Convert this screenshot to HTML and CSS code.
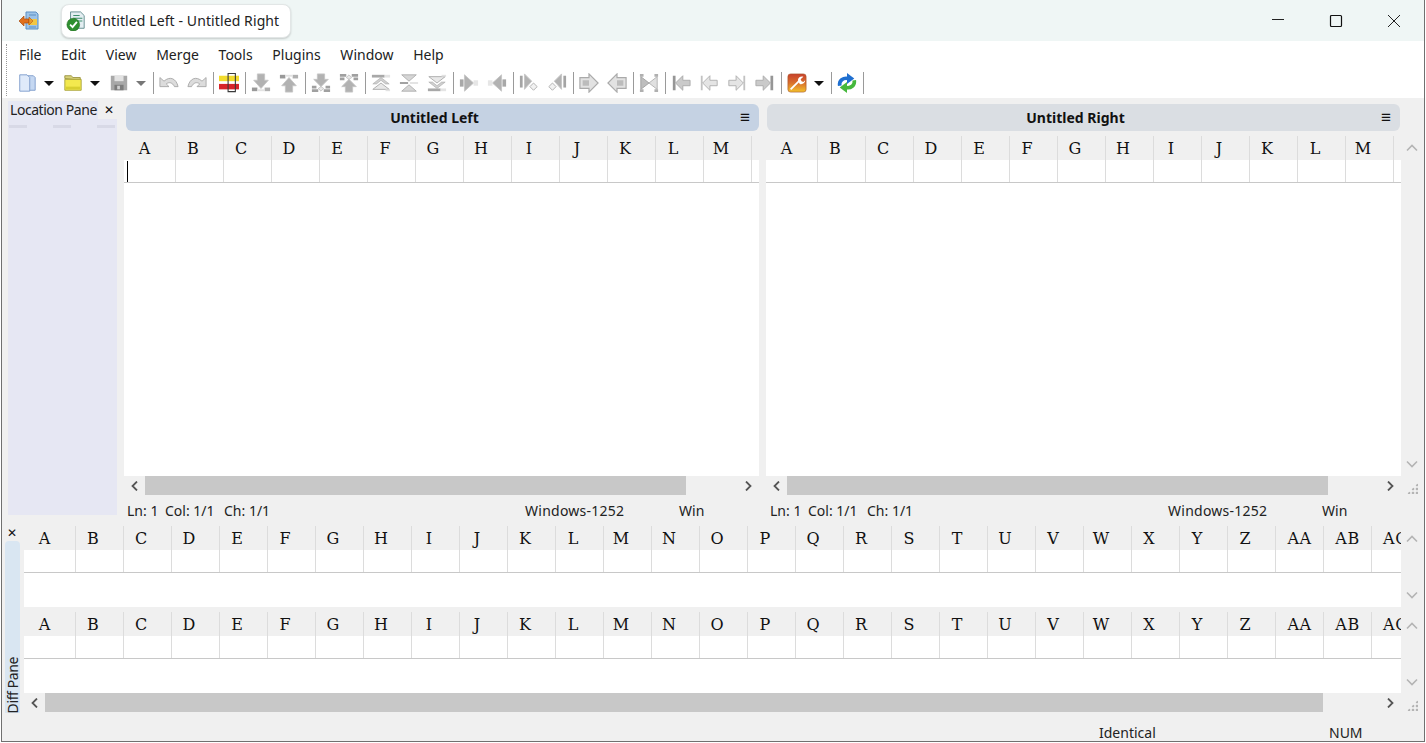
FILE: index.html
```html
<!DOCTYPE html>
<html lang="en">
<head>
    <meta charset="UTF-8">
    <title>Untitled Left - Untitled Right</title>
    <link rel="stylesheet" href="styles.css">
</head>
<body>
    <svg class="defs" width="0" height="0">
        <defs>
            <linearGradient id="tool-grad" x1="0" y1="0" x2="0" y2="1">
                <stop offset="0" stop-color="#c8402c"/>
                <stop offset="0.5" stop-color="#d9702c"/>
                <stop offset="1" stop-color="#f3c22c"/>
            </linearGradient>
            <symbol id="i-app" viewBox="0 0 22 22">
                <path d="M8 2h10l2 2v15H8z" fill="#9cc3e8" stroke="#5b8fc4"/>
                <path d="M10 9h9v6h-9z" fill="#f2c744"/>
                <path d="M11 5h7M11 17h7" stroke="#5b8fc4"/>
                <path d="M1 11l5-5v3h5v4H6v3z" fill="#e0701c" stroke="#a64a10" stroke-width=".7"/>
                <path d="M15 11l-4-4v8z" fill="#eb9a2c" stroke="#a64a10" stroke-width=".5"/>
            </symbol>
            <symbol id="i-doc" viewBox="0 0 22 22">
                <path d="M5 1h11l4 4v14H5z" fill="#e4eef2" stroke="#5f8a8c"/>
                <path d="M8 5h7M8 8h10M8 11h10" stroke="#3f8f6f" stroke-width="1.200"/>
                <circle cx="8" cy="15" r="7" fill="#2f8f2f" stroke="#1d6a1d" stroke-width=".6"/>
                <path d="M4.500 15l2.700 2.700L12 12" fill="none" stroke="#fff" stroke-width="2"/>
            </symbol>
            <symbol id="i-new" viewBox="0 0 22 22">
                <path d="M10 3h8l2 2v14h-10z" fill="#c5d8f2" stroke="#7d9ccb"/>
                <path d="M3 2h8l3 3v15H3z" fill="#dfeafa" stroke="#7d9ccb"/>
            </symbol>
            <symbol id="i-open" viewBox="0 0 22 22">
                <path d="M2 6V3h7l2 2h8v3z" fill="#d8d27a" stroke="#9a9440"/>
                <path d="M2 7h18v12H2z" fill="#f3e94e" stroke="#a9a23c"/>
                <path d="M3 15h16v3H3z" fill="#d8cf30"/>
            </symbol>
            <symbol id="i-save" viewBox="0 0 22 22">
                <path d="M2 3h18v16H2z" fill="#a8a8a8"/>
                <path d="M6 3h10v6H6z" fill="#e2e2e2"/>
                <path d="M6 13h10v6H6z" fill="#7c7c7c"/>
                <path d="M9 14h3v4H9z" fill="#d0d0d0"/>
            </symbol>
            <symbol id="i-undo" viewBox="0 0 22 22">
                <path d="M1 5v10h10l-3-3c3-2.500 7-1.500 9 3h4C19 6 12 3 5.500 9z" fill="#dcdcdc" stroke="#a8a8a8"/>
            </symbol>
            <symbol id="i-marker" viewBox="0 0 22 22">
                <path d="M0 3h22v6H0z" fill="#f3dc2e"/>
                <path d="M0 12h22v6H0z" fill="#d8242a"/>
                <path d="M10 .5h8v20h-8z" fill="none" stroke="#3a3a3a" stroke-width="1.200"/>
            </symbol>
            <symbol id="i-next" viewBox="0 0 22 22">
                <path d="M7 1h8v7h4l-8 9-8-9h4z" fill="#b2b2b2" stroke="#c6c6c6"/>
                <path d="M1 16h6v4H1z" fill="#999"/>
                <path d="M15 16h6v4h-6z" fill="#b0b0b0"/>
                <path d="M7 18h8v2H7z" fill="#e2e2e2"/>
            </symbol>
            <symbol id="i-nextc" viewBox="0 0 22 22">
                <path d="M7 1h8v6h4l-8 8-8-8h4z" fill="#b2b2b2" stroke="#c6c6c6"/>
                <path d="M1 14h5v3H1zM16 14h5v3h-5zM1 18h7v3H1zM14 18h7v3h-7z" fill="#a0a0a0"/>
                <path d="M8 17l3-2 3 2-3 3z" fill="#e8e8e8" stroke="#b0b0b0" stroke-width=".7"/>
            </symbol>
            <symbol id="i-first" viewBox="0 0 22 22">
                <path d="M1 2h14v3H1z" fill="#a8a8a8"/>
                <path d="M15 2h6v3h-6z" fill="#e4e4e4"/>
                <path d="M11 5l9 7h-4l-5-4-5 4H2z" fill="#d0d0d0" stroke="#ababab" stroke-width=".7"/>
                <path d="M11 11l9 7H2z" fill="#e8e8e8" stroke="#ababab"/>
                <path d="M16 18h5v2h-5z" fill="#e2e2e2"/>
            </symbol>
            <symbol id="i-cur" viewBox="0 0 22 22">
                <path d="M3 2h16l-8 7z" fill="#d6d6d6" stroke="#aeaeae"/>
                <path d="M3 20h16l-8-7z" fill="#d6d6d6" stroke="#aeaeae"/>
                <path d="M1 10h9v2H1z" fill="#999"/>
                <path d="M12 10h9v2h-9z" fill="#e2e2e2"/>
            </symbol>
            <symbol id="i-copy" viewBox="0 0 22 22">
                <path d="M1 7h4v8H1z" fill="#a8a8a8"/>
                <path d="M6 2l10 9-10 9z" fill="#b2b2b2" stroke="#c6c6c6"/>
                <path d="M16 8h5v6h-5z" fill="#e6e6e6"/>
            </symbol>
            <symbol id="i-copyd" viewBox="0 0 22 22">
                <path d="M1 3h3v13H1z" fill="#a4a4a4"/>
                <path d="M6 1l8 8-8 9z" fill="#b2b2b2" stroke="#c6c6c6"/>
                <path d="M16 11l4 4-4 4-4-4z" fill="#f2f2f2" stroke="#adadad"/>
            </symbol>
            <symbol id="i-copyb" viewBox="0 0 22 22">
                <path d="M1 5h10V1l10 10-10 10v-4H1z" fill="#e2e2e2" stroke="#aaa" stroke-width="1.300"/>
                <path d="M4 8h7v6H4z" fill="#bcbcbc"/>
            </symbol>
            <symbol id="i-all" viewBox="0 0 22 22">
                <path d="M2 4l9 7-9 7z" fill="#bebebe" stroke="#a0a0a0"/>
                <path d="M20 4l-9 7 9 7z" fill="#e0e0e0" stroke="#b0b0b0"/>
                <path d="M1 1h4v3H1zM17 1h4v3h-4zM1 18h4v3H1zM17 18h4v3h-4z" fill="#b0b0b0"/>
            </symbol>
            <symbol id="i-lineend" viewBox="0 0 22 22">
                <path d="M2 3h3v16H2z" fill="#969696"/>
                <path d="M5 11l8-8v5h8v6h-8v5z" fill="#cacaca" stroke="#aaa"/>
            </symbol>
            <symbol id="i-linego" viewBox="0 0 22 22">
                <path d="M2 3h2v16H2z" fill="#c2c2c2"/>
                <path d="M4 11l8-8v5h8v6h-8v5z" fill="#e4e4e4" stroke="#aeaeae"/>
            </symbol>
            <symbol id="i-tools" viewBox="0 0 22 22">
                <rect x="1" y="1" width="20" height="20" rx="3" fill="url(#tool-grad)" stroke="#a8552a" stroke-width=".7"/>
                <path d="M4 18L14 8" stroke="#fff" stroke-width="2"/>
                <path d="M12 8c0-3 3-5 6-4l-3 3 1 2 2 1 2-2c0 3-3 5-6 4z" fill="#fff"/>
            </symbol>
            <symbol id="i-refresh" viewBox="0 0 22 22">
                <path d="M3 14C2 8 7 5 12 6" fill="none" stroke="#1f6fd0" stroke-width="4"/>
                <path d="M11 0l8 6-8 6z" fill="#1f6fd0"/>
                <path d="M19 8c1 6-4 9-9 8" fill="none" stroke="#45b83c" stroke-width="4"/>
                <path d="M11 22l-8-6 8-6z" fill="#45b83c"/>
            </symbol>
            <symbol id="i-up" viewBox="0 0 12 8">
                <path d="M1 6.500l5-5 5 5" fill="none" stroke="#b4b4b4" stroke-width="1.600"/>
            </symbol>
            <symbol id="i-left" viewBox="0 0 8 10">
                <path d="M6.500 .5L2 5l4.500 4.500" fill="none" stroke="#555" stroke-width="1.800"/>
            </symbol>
        </defs>
    </svg>

    <div class="window">
        <div class="titlebar">
            <svg class="app-icon"><use href="#i-app"/></svg>
            <div class="title-tab">
                <svg class="tab-icon"><use href="#i-doc"/></svg>
                <span>Untitled Left - Untitled Right</span>
            </div>
            <div class="win-controls">
                <span class="win-btn"><svg width="14" height="14"><path d="M1 5.500h12" stroke="#222"/></svg></span>
                <span class="win-btn"><svg width="14" height="14"><rect x="1.500" y="1.500" width="11" height="11" rx="1" fill="none" stroke="#111" stroke-width="1.200"/></svg></span>
                <span class="win-btn"><svg width="14" height="14"><path d="M1 1l12 12M13 1L1 13" stroke="#222"/></svg></span>
            </div>
        </div>

        <div class="bars">
            <div class="menubar">
                <span>File</span><span>Edit</span><span>View</span><span>Merge</span><span>Tools</span><span>Plugins</span><span>Window</span><span>Help</span>
            </div>
            <div class="toolbar">
                <span class="tb wide"><svg><use href="#i-new"/></svg><i class="caret"></i></span>
                <span class="tb wide"><svg><use href="#i-open"/></svg><i class="caret"></i></span>
                <span class="tb wide"><svg><use href="#i-save"/></svg><i class="caret off"></i></span>
                <span class="sep"></span>
                <span class="tb"><svg><use href="#i-undo"/></svg></span>
                <span class="tb"><svg class="flip-x"><use href="#i-undo"/></svg></span>
                <span class="sep"></span>
                <span class="tb"><svg><use href="#i-marker"/></svg></span>
                <span class="sep"></span>
                <span class="tb"><svg><use href="#i-next"/></svg></span>
                <span class="tb"><svg class="flip-y"><use href="#i-next"/></svg></span>
                <span class="sep"></span>
                <span class="tb"><svg><use href="#i-nextc"/></svg></span>
                <span class="tb"><svg class="flip-y"><use href="#i-nextc"/></svg></span>
                <span class="sep"></span>
                <span class="tb"><svg><use href="#i-first"/></svg></span>
                <span class="tb"><svg><use href="#i-cur"/></svg></span>
                <span class="tb"><svg class="flip-y"><use href="#i-first"/></svg></span>
                <span class="sep"></span>
                <span class="tb"><svg><use href="#i-copy"/></svg></span>
                <span class="tb"><svg class="flip-x"><use href="#i-copy"/></svg></span>
                <span class="sep"></span>
                <span class="tb"><svg><use href="#i-copyd"/></svg></span>
                <span class="tb"><svg class="flip-x"><use href="#i-copyd"/></svg></span>
                <span class="sep"></span>
                <span class="tb"><svg><use href="#i-copyb"/></svg></span>
                <span class="tb"><svg class="flip-x"><use href="#i-copyb"/></svg></span>
                <span class="sep"></span>
                <span class="tb"><svg><use href="#i-all"/></svg></span>
                <span class="sep"></span>
                <span class="tb"><svg><use href="#i-lineend"/></svg></span>
                <span class="tb"><svg><use href="#i-linego"/></svg></span>
                <span class="tb"><svg class="flip-x"><use href="#i-linego"/></svg></span>
                <span class="tb"><svg class="flip-x"><use href="#i-lineend"/></svg></span>
                <span class="sep"></span>
                <span class="tb wide"><svg><use href="#i-tools"/></svg><i class="caret"></i></span>
                <span class="sep"></span>
                <span class="tb"><svg><use href="#i-refresh"/></svg></span>
                <span class="sep"></span>
            </div>
        </div>

        <div class="top">
            <div class="location">
                <div class="loc-head">
                    <span class="loc-label">Location Pane</span>
                    <span class="close-x">✕</span>
                </div>
                <div class="loc-body">
                    <div class="loc-marks"><i></i><i></i><i></i></div>
                </div>
            </div>

            <div class="pane">
                <div class="pane-head active"><b>Untitled Left</b><span class="burger">≡</span></div>
                <div class="grid">
                    <div class="cols"><span>A</span><span>B</span><span>C</span><span>D</span><span>E</span><span>F</span><span>G</span><span>H</span><span>I</span><span>J</span><span>K</span><span>L</span><span>M</span><span></span></div>
                    <div class="cells"><i></i><i></i><i></i><i></i><i></i><i></i><i></i><i></i><i></i><i></i><i></i><i></i><i></i><i></i><em class="text-caret"></em></div>
                </div>
                <div class="hscroll"><svg class="arrow"><use href="#i-left"/></svg><div class="track"><div class="thumb pane-thumb"></div></div><svg class="arrow flip-x"><use href="#i-left"/></svg></div>
                <div class="status">
                    <span class="st-ln">Ln: 1</span><span class="st-col">Col: 1/1</span><span class="st-ch">Ch: 1/1</span><span class="st-enc">Windows-1252</span><span>Win</span>
                </div>
            </div>

            <div class="pane right-pane">
                <div class="pane-head"><b>Untitled Right</b><span class="burger">≡</span></div>
                <div class="grid">
                    <div class="cols"><span>A</span><span>B</span><span>C</span><span>D</span><span>E</span><span>F</span><span>G</span><span>H</span><span>I</span><span>J</span><span>K</span><span>L</span><span>M</span><span></span></div>
                    <div class="cells"><i></i><i></i><i></i><i></i><i></i><i></i><i></i><i></i><i></i><i></i><i></i><i></i><i></i><i></i></div>
                </div>
                <div class="hscroll"><svg class="arrow"><use href="#i-left"/></svg><div class="track"><div class="thumb pane-thumb"></div></div><svg class="arrow flip-x"><use href="#i-left"/></svg></div>
                <div class="status">
                    <span class="st-ln">Ln: 1</span><span class="st-col">Col: 1/1</span><span class="st-ch">Ch: 1/1</span><span class="st-enc">Windows-1252</span><span>Win</span>
                </div>
            </div>

            <div class="vbar main-vbar">
                <svg class="chev"><use href="#i-up"/></svg>
                <svg class="chev flip-y"><use href="#i-up"/></svg>
                <i class="grip"></i>
            </div>
        </div>

        <div class="bottom">
            <div class="diff-side">
                <span class="close-x">✕</span>
                <div class="diff-tab"><span>Diff Pane</span></div>
            </div>
            <div class="diff-main">
                <div class="diff-row">
                    <div class="grid diff-grid">
                        <div class="cols"><span>A</span><span>B</span><span>C</span><span>D</span><span>E</span><span>F</span><span>G</span><span>H</span><span>I</span><span>J</span><span>K</span><span>L</span><span>M</span><span>N</span><span>O</span><span>P</span><span>Q</span><span>R</span><span>S</span><span>T</span><span>U</span><span>V</span><span>W</span><span>X</span><span>Y</span><span>Z</span><span class="two">AA</span><span class="two">AB</span><span class="two">AC</span></div>
                        <div class="cells"><i></i><i></i><i></i><i></i><i></i><i></i><i></i><i></i><i></i><i></i><i></i><i></i><i></i><i></i><i></i><i></i><i></i><i></i><i></i><i></i><i></i><i></i><i></i><i></i><i></i><i></i><i></i><i></i><i></i></div>
                    </div>
                    <div class="vbar">
                        <svg class="chev"><use href="#i-up"/></svg>
                        <svg class="chev flip-y"><use href="#i-up"/></svg>
                    </div>
                </div>
                <div class="diff-row second">
                    <div class="grid diff-grid">
                        <div class="cols"><span>A</span><span>B</span><span>C</span><span>D</span><span>E</span><span>F</span><span>G</span><span>H</span><span>I</span><span>J</span><span>K</span><span>L</span><span>M</span><span>N</span><span>O</span><span>P</span><span>Q</span><span>R</span><span>S</span><span>T</span><span>U</span><span>V</span><span>W</span><span>X</span><span>Y</span><span>Z</span><span class="two">AA</span><span class="two">AB</span><span class="two">AC</span></div>
                        <div class="cells"><i></i><i></i><i></i><i></i><i></i><i></i><i></i><i></i><i></i><i></i><i></i><i></i><i></i><i></i><i></i><i></i><i></i><i></i><i></i><i></i><i></i><i></i><i></i><i></i><i></i><i></i><i></i><i></i><i></i></div>
                    </div>
                    <div class="vbar">
                        <svg class="chev"><use href="#i-up"/></svg>
                        <svg class="chev flip-y"><use href="#i-up"/></svg>
                    </div>
                </div>
                <div class="diff-scroll">
                    <div class="hscroll"><svg class="arrow"><use href="#i-left"/></svg><div class="track"><div class="thumb diff-thumb"></div></div><svg class="arrow flip-x"><use href="#i-left"/></svg></div>
                    <i class="grip"></i>
                </div>
            </div>
        </div>

        <div class="mainstatus">
            <span class="st-identical">Identical</span><span>NUM</span>
        </div>
    </div>
</body>
</html>
```

FILE: styles.css
```css
* {
    box-sizing: border-box;
}
body {
    margin: 0;
    background: #fff;
    font-family: "Noto Sans", "Open Sans", sans-serif;
    font-size: 14px;
    color: #222;
    overflow: hidden;
}
.defs {
    position: absolute;
}
.window {
    width: 1424px;
    height: 742px;
    margin-left: 1px;
    border: 1px solid #707070;
    border-top: none;
    background: #f0f0f0;
    display: flex;
    flex-direction: column;
}

/* title bar */
.titlebar {
    height: 41px;
    flex: none;
    background: #eff6f5;
    display: flex;
    align-items: center;
    padding-left: 16px;
}
.app-icon {
    width: 22px;
    height: 22px;
}
.title-tab {
    margin-left: 21px;
    width: 230px;
    height: 34px;
    background: #fff;
    border: 1px solid #e2e6e6;
    border-radius: 8px;
    box-shadow: 0 1px 2px rgba(0, 0, 0, 0.18);
    display: flex;
    align-items: center;
    padding-left: 4px;
    gap: 6px;
    white-space: nowrap;
}
.title-tab span {
    letter-spacing: 0.1px;
}
.tab-icon {
    width: 20px;
    height: 20px;
}
.win-controls {
    margin-left: auto;
    display: flex;
    padding-right: 1px;
}
.win-btn {
    width: 58px;
    display: flex;
    justify-content: center;
}

/* menu and toolbar */
.bars {
    flex: none;
    height: 57px;
    background: #fff;
    position: relative;
    padding-left: 4px;
}
.bars::before {
    content: "";
    display: block;
    position: absolute;
    left: 4px;
    top: 3px;
    bottom: 2px;
    border-left: 1px dotted #999;
}
.menubar {
    height: 27px;
    display: flex;
    align-items: center;
    gap: 19.7px;
    padding-left: 13px;
}
.toolbar {
    height: 30px;
    display: flex;
    align-items: center;
    padding-left: 7px;
}
.tb {
    width: 28px;
    height: 24px;
    flex: none;
    display: flex;
    align-items: center;
    justify-content: center;
}
.tb svg {
    width: 20px;
    height: 20px;
    flex: none;
}
.tb.wide {
    width: 46px;
    justify-content: flex-start;
    padding-left: 4px;
}
.flip-x {
    transform: scaleX(-1);
}
.flip-y {
    transform: scaleY(-1);
}
.caret {
    margin-left: 7px;
    width: 0;
    height: 0;
    border-left: 5px solid transparent;
    border-right: 5px solid transparent;
    border-top: 5px solid #111;
}
.caret.off {
    border-top-color: #777;
}
.sep {
    width: 4px;
    height: 22px;
    flex: none;
    display: flex;
    justify-content: center;
}
.sep::before {
    content: "";
    width: 1px;
    background: #9a9a9a;
}

/* top: location pane and the two file panes */
.top {
    height: 428px;
    flex: none;
    display: flex;
    padding-top: 2px;
}
.location {
    width: 109px;
    margin-left: 6px;
    margin-right: 7px;
    height: 415px;
    flex: none;
    display: flex;
    flex-direction: column;
}
.loc-head {
    height: 18px;
    display: flex;
    align-items: center;
    flex: none;
    margin-top: 1px;
}
.loc-label {
    width: 90px;
    height: 18px;
    line-height: 18px;
    background: #e6e8f4;
    padding-left: 2px;
    white-space: nowrap;
    letter-spacing: -0.45px;
}
.close-x {
    font-size: 12px;
    color: #111;
    font-family: "DejaVu Sans", sans-serif;
    line-height: 1;
}
.loc-head .close-x {
    margin-left: 6px;
}
.loc-body {
    flex: 1;
    background: #e6e7f3;
    padding-top: 6px;
}
.loc-marks {
    display: flex;
    justify-content: space-between;
    padding: 0 2px 0 1px;
}
.loc-marks i {
    width: 18px;
    height: 3px;
    background: #d8d9e6;
}
.pane {
    width: 635px;
    flex: none;
    display: flex;
    flex-direction: column;
}
.right-pane {
    margin-left: 7px;
}
.pane-head {
    height: 27px;
    flex: none;
    margin: 4px 0 5px 2px;
    background: #dadee3;
    border-radius: 6px;
    display: flex;
    align-items: center;
    justify-content: center;
    padding-right: 16px;
    position: relative;
    color: #111;
}
.right-pane .pane-head {
    margin-left: 1px;
    margin-right: 1px;
}
.pane-head.active {
    background: #c5d2e3;
}
.burger {
    position: absolute;
    right: 9px;
    top: 2px;
    font-size: 17px;
    line-height: 22px;
    color: #111;
}
.grid {
    background: #fff;
    flex: 1;
    min-width: 0;
    overflow: hidden;
}
.cols,
.cells {
    display: flex;
    position: relative;
}
.cols {
    height: 24px;
    background: #f0f0f0;
}
.cols span {
    flex: 0 0 48px;
    height: 24px;
    line-height: 25px;
    border-right: 1px solid #dcdcdc;
    padding-right: 13px;
    text-align: center;
    font-family: "DejaVu Serif", "Liberation Serif", serif;
    font-size: 16px;
    color: #111;
    white-space: nowrap;
}
.cols span.two {
    padding-right: 0;
    letter-spacing: 0.5px;
}
.cols span:first-child,
.cells i:first-child {
    flex-basis: 52px;
    padding-left: 3px;
    padding-right: 13px;
}
.cells {
    height: 23px;
    border-bottom: 1px solid #c8c8c8;
}
.cells i {
    flex: 0 0 48px;
    border-right: 1px solid #dcdcdc;
}
.text-caret {
    position: absolute;
    left: 3px;
    top: 1px;
    width: 1px;
    height: 21px;
    background: #000;
}
.hscroll {
    height: 19px;
    flex: none;
    display: flex;
    align-items: center;
    background: #f0f0f0;
}
.arrow {
    width: 21px;
    height: 10px;
    flex: none;
}
.track {
    flex: 1;
    height: 19px;
}
.thumb {
    height: 19px;
    background: #c8c8c8;
}
.pane-thumb {
    width: 541px;
}
.status {
    height: 31px;
    flex: none;
    display: flex;
    align-items: center;
    padding-left: 3px;
    white-space: nowrap;
}
.right-pane .status {
    padding-left: 4px;
}
.st-ln {
    width: 38px;
}
.st-col {
    width: 59px;
}
.st-ch {
    width: 301px;
}
.st-enc {
    width: 154px;
    letter-spacing: 0.25px;
}
.vbar {
    width: 22px;
    flex: none;
    display: flex;
    flex-direction: column;
    justify-content: space-between;
    align-items: center;
    padding: 9px 0 8px;
}
.chev {
    width: 12px;
    height: 8px;
    flex: none;
}
.main-vbar {
    height: 425px;
    position: relative;
    padding: 44px 0 57px;
}
.second .vbar {
    padding: 10px 0 7px;
}
.grip {
    width: 11px;
    height: 11px;
    flex: none;
    background:
        radial-gradient(circle, #b4b4b4 1.500px, transparent 1.600px) 0 0 / 4px 4px;
    clip-path: polygon(100% 0, 100% 100%, 0 100%);
}
.main-vbar .grip {
    position: absolute;
    left: 6px;
    bottom: 31px;
}

/* bottom: diff pane */
.bottom {
    height: 187px;
    flex: none;
    display: flex;
}
.diff-side {
    width: 22px;
    flex: none;
    display: flex;
    flex-direction: column;
}
.diff-side .close-x {
    height: 15px;
    padding-left: 5px;
    padding-top: 1px;
}
.diff-tab {
    width: 15px;
    margin-left: 3px;
    height: 172px;
    background: #d9e6f2;
    border-radius: 4px 4px 0 0;
    display: flex;
    align-items: flex-end;
    justify-content: center;
}
.diff-tab span {
    writing-mode: vertical-rl;
    transform: rotate(180deg);
    white-space: nowrap;
    letter-spacing: -0.4px;
    line-height: 15px;
}
.diff-main {
    width: 1399px;
    flex: none;
    display: flex;
    flex-direction: column;
}
.diff-row {
    height: 81px;
    flex: none;
    display: flex;
}
.diff-row.second {
    height: 86px;
    padding-top: 5px;
}
.diff-grid {
    width: 1377px;
    flex: none;
}
.diff-scroll {
    height: 19px;
    flex: none;
    display: flex;
    align-items: center;
}
.diff-scroll .hscroll {
    width: 1377px;
}
.diff-thumb {
    width: 1278px;
}
.diff-scroll .grip {
    margin-left: 6px;
    margin-top: 6px;
}
.mainstatus {
    flex: 1;
    display: flex;
    align-items: flex-end;
    padding-left: 1097px;
    line-height: 16px;
    white-space: nowrap;
}
.st-identical {
    width: 230px;
}
```
